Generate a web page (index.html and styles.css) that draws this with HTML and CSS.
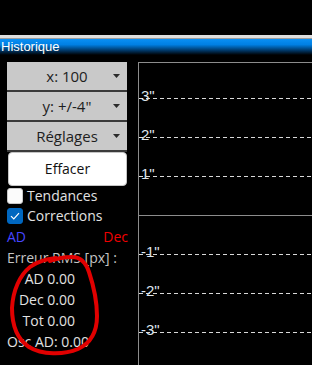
FILE: index.html
```html
<!DOCTYPE html>
<html lang="fr">

<head>
	<meta charset="UTF-8">
	<meta name="viewport" content="width=device-width, initial-scale=1.0">
	<title>Historique</title>
	<link rel="stylesheet" href="styles.css">
</head>

<body>
	<div class="edge"></div>
	<div class="titlebar">Historique</div>

	<div class="main">
		<!-- panneau de gauche -->
		<div class="side">
			<div class="drop"><span class="drop-text">x: 100</span><svg class="arrow" width="7" height="4" viewBox="0 0 7 4"><polygon points="0,0 7,0 3.5,4" fill="#2a2a2a"/></svg></div>
			<div class="drop"><span class="drop-text">y: +/-4"</span><svg class="arrow" width="7" height="4" viewBox="0 0 7 4"><polygon points="0,0 7,0 3.5,4" fill="#2a2a2a"/></svg></div>
			<div class="drop"><span class="drop-text">Réglages</span><svg class="arrow" width="7" height="4" viewBox="0 0 7 4"><polygon points="0,0 7,0 3.5,4" fill="#2a2a2a"/></svg></div>
			<div class="btn">Effacer</div>

			<div class="check"><span class="box"></span>Tendances</div>
			<div class="check"><span class="box on"><svg width="16" height="16" viewBox="0 0 16 16"><path d="M4 8.2 L6.8 11 L12 5.2" fill="none" stroke="#fff" stroke-width="1.2"/></svg></span>Corrections</div>

			<div class="legend"><span class="ad">AD</span><span class="dec">Dec</span></div>
			<div class="line muted">Erreur RMS [px] :</div>
			<div class="line stat">AD 0.00</div>
			<div class="line stat">Dec 0.00</div>
			<div class="line stat">Tot 0.00</div>
			<div class="line">Osc AD: 0.00</div>
		</div>

		<!-- graphique -->
		<div class="chart">
			<div class="gl first"><span>3"</span></div>
			<div class="gl"><span>2"</span></div>
			<div class="gl"><span>1"</span></div>
			<div class="gl zero"></div>
			<div class="gl"><span>-1"</span></div>
			<div class="gl"><span>-2"</span></div>
			<div class="gl"><span>-3"</span></div>
		</div>
	</div>

	<!-- annotation rouge -->
	<svg class="mark" width="312" height="365" viewBox="0 0 312 365">
		<path d="M50 261 C58 258 66 257 72 257 C80 257 86 263 89 272 C93 284 97 300 97 316 C97 331 91 343 78 349 C64 355 42 355 29 347 C17 339 12 325 12 308 C13 290 20 275 30 267 C38 261 46 259 56 258" fill="none" stroke="#e10000" stroke-width="4" stroke-linecap="round"/>
	</svg>
</body>

</html>
```

FILE: styles.css
```css
html,
body {
	margin: 0;
	padding: 0
}

body {
	position: relative;
	width: 312px;
	height: 365px;
	overflow: hidden;
	background: #000;
	font-family: "Open Sans", "Noto Sans", sans-serif;
	font-size: 14px;
	color: #e2e2e2
}

.edge {
	margin-top: 35px;
	height: 3px;
	background: #dedede;
	border-bottom: 1px solid #9c9c9c
}

.titlebar {
	height: 16px;
	line-height: 16px;
	padding-left: 1px;
	font-family: "Liberation Sans", Arial, sans-serif;
	font-size: 13px;
	color: #fff;
	background: linear-gradient(#0a90f4 0%, #0080e4 35%, #003a6c 70%, #000 100%)
}

.main {
	display: flex;
	padding-top: 7px
}

.side {
	width: 120px;
	margin-left: 7px;
	flex: none
}

.drop {
	height: 28px;
	display: grid;
	grid-template-columns: 1fr auto 1fr;
	align-items: center;
	background: #c9c9c9;
	border-bottom: 2px solid #3a3a3a;
	color: #1e1e1e;
	font-size: 15px
}

.drop-text {
	grid-column: 2
}

.arrow {
	grid-column: 3;
	justify-self: end;
	margin-right: 7px
}

.btn {
	height: 32px;
	margin-left: 1px;
	line-height: 32px;
	text-align: center;
	background: #fff;
	border: 1px solid #c4c4c4;
	border-radius: 4px;
	color: #111
}

.check {
	height: 20px;
	line-height: 20px;
	display: flex;
	align-items: center
}

.check:first-of-type {
	margin-top: 2px
}

.box {
	width: 14px;
	height: 14px;
	margin-right: 4px;
	border: 1px solid #c8c8c8;
	border-radius: 3px;
	background: #fbfbfb;
	position: relative
}

.box.on {
	background: #0067c0;
	border-color: #0067c0
}

.box svg {
	position: absolute;
	left: -1px;
	top: -1px
}

.legend {
	display: flex;
	justify-content: space-between;
	line-height: 21px;
	margin-right: -1px
}

.ad {
	color: #4646ff
}

.dec {
	color: #f00000
}

.line {
	line-height: 21px;
	white-space: nowrap
}

.muted {
	color: #c4c4c4
}

.stat {
	width: 68px;
	text-align: right
}

.chart {
	flex: 1;
	margin-left: 11px;
	border-left: 1px solid #8c8c8c;
	border-top: 1px solid #8c8c8c;
	height: 320px
}

.gl {
	height: 39px;
	display: flex;
	align-items: flex-end;
	padding-left: 2px;
	box-sizing: border-box;
	background: repeating-linear-gradient(90deg, #d8d8d8 0 4px, transparent 4px 7px) left bottom / 100% 1px no-repeat;
	font-family: "Liberation Sans", Arial, sans-serif;
	font-size: 15px;
	color: #dfe6ee
}

.gl.first {
	height: 36px
}

.gl.zero {
	background: linear-gradient(#8c8c8c, #8c8c8c) left bottom / 100% 1px no-repeat
}

.gl span {
	line-height: 15px;
	margin-bottom: -4px
}

.mark {
	position: absolute;
	left: 0;
	top: 0;
	pointer-events: none
}
```
